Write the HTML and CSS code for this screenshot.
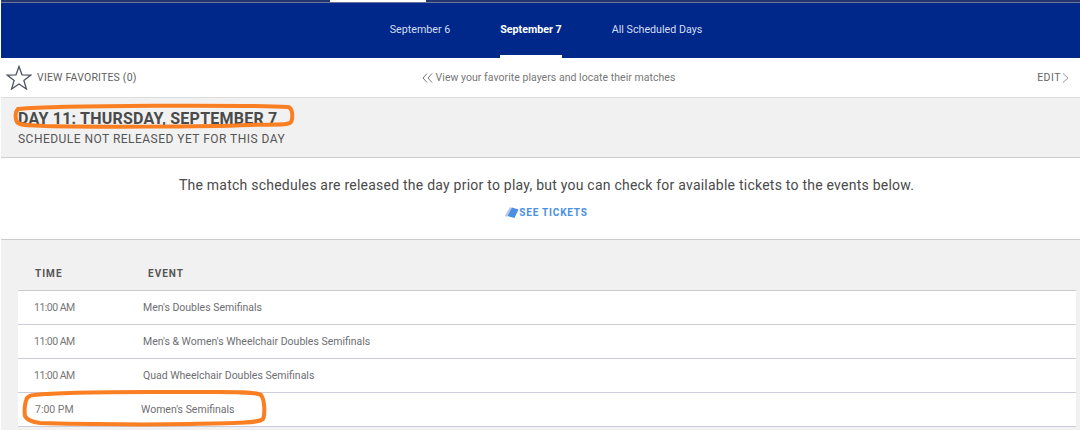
FILE: index.html
```html
<!DOCTYPE html>
<html lang="en">
<head>
    <meta charset="UTF-8">
    <meta name="viewport" content="width=device-width, initial-scale=1.0">
    <title>Schedule - Day 11</title>
    <link rel="stylesheet" href="styles.css">
</head>
<body>
    <div class="top-strip">
        <div class="top-strip-active"></div>
    </div>
    <!-- Day tabs -->
    <nav class="day-nav">
        <a class="day-tab">September 6</a>
        <a class="day-tab active">September 7</a>
        <a class="day-tab">All Scheduled Days</a>
    </nav>
    <!-- Favorites bar -->
    <div class="fav-bar">
        <div class="fav-left">
            <svg class="star" width="26" height="25" viewBox="0 0 26 25">
                <path d="M13 1.500l3 8.300 8.900.3-7 5.400 2.500 8.500-7.400-5-7.400 5 2.500-8.500-7-5.400 8.900-.3z" fill="none" stroke="#4f5560" stroke-width="1.300"/>
            </svg>
            <span>VIEW FAVORITES (0)</span>
        </div>
        <div class="fav-middle">
            <svg width="11" height="10" viewBox="0 0 11 10">
                <path d="M5 .5L1 5l4 4.500M10 .5L6 5l4 4.500" fill="none" stroke="#777" stroke-width="1"/>
            </svg>
            <span>View your favorite players and locate their matches</span>
        </div>
        <div class="fav-right">
            <span>EDIT</span>
            <svg width="7" height="10" viewBox="0 0 7 10">
                <path d="M1 .5L6 5 1 9.500" fill="none" stroke="#999" stroke-width="1"/>
            </svg>
        </div>
    </div>
    <!-- Day heading -->
    <header class="day-header">
        <h1>DAY 11: THURSDAY, SEPTEMBER 7</h1>
        <p>SCHEDULE NOT RELEASED YET FOR THIS DAY</p>
    </header>
    <!-- Notice -->
    <section class="notice">
        <p>The match schedules are released the day prior to play, but you can check for available tickets to the events below.</p>
        <a class="tickets-link">
            <svg width="14" height="13" viewBox="0 0 14 13">
                <path d="M0 9.500L5 1l2 1L2 11z" fill="#b9c6ea"/>
                <path d="M2.500 10L7 1.500 13.500 3.500 9.500 12z" fill="#4a90e2"/>
            </svg>
            <span>SEE TICKETS</span>
        </a>
    </section>
    <!-- Schedule table -->
    <section class="schedule">
        <div class="schedule-head">
            <span class="head-time">TIME</span>
            <span>EVENT</span>
        </div>
        <div class="schedule-row">
            <span class="col-time">11:00 AM</span>
            <span>Men's Doubles Semifinals</span>
        </div>
        <div class="schedule-row">
            <span class="col-time">11:00 AM</span>
            <span>Men's &amp; Women's Wheelchair Doubles Semifinals</span>
        </div>
        <div class="schedule-row">
            <span class="col-time">11:00 AM</span>
            <span>Quad Wheelchair Doubles Semifinals</span>
        </div>
        <div class="schedule-row shifted">
            <span class="col-time">7:00 PM</span>
            <span>Women's Semifinals</span>
        </div>
    </section>
    <!-- Orange annotations drawn over the page -->
    <svg class="mark" width="1080" height="430" viewBox="0 0 1080 430">
        <path d="M18 109C60 105 250 105 288 107C293 108 293 118 291 122C288 126 270 124 250 125C200 127 90 127 45 126C30 125 20 126 17 122C15 118 15 112 18 109Z" fill="none" stroke="#fa7f22" stroke-width="4"/>
        <path d="M34 395C70 391 140 392 190 392C225 392 255 391 261 395C265 400 265 415 263 419C258 424 220 423 190 424C140 425 80 424 40 423C32 422 27 420 25 416C24 410 25 402 27 398C29 396 31 395 34 395Z" fill="none" stroke="#fa7f22" stroke-width="4"/>
    </svg>
</body>
</html>
```

FILE: styles.css
```css
* {
    margin: 0;
    padding: 0;
    box-sizing: border-box;
}

body {
    position: relative;
    height: 430px;
    padding-left: 1px;
    overflow: hidden;
    font-family: Roboto, Arial, sans-serif;
    background-color: #fff;
    color: #555;
}

.top-strip {
    height: 3px;
    padding-left: 329px;
    background-color: #24346f;
    border-bottom: 1px solid #6a769c;
}

.top-strip-active {
    width: 96px;
    height: 2px;
    background-color: #fff;
}

.day-nav {
    display: flex;
    justify-content: center;
    gap: 50px;
    height: 55px;
    padding-left: 11px;
    background-color: #00288a;
}

.day-tab {
    padding-top: 20px;
    font-size: 10.7px;
    line-height: 14px;
    color: #d6ddf0;
}

.day-tab.active {
    font-weight: 700;
    color: #fff;
    border-bottom: 3px solid #fff;
}

.fav-bar {
    display: grid;
    grid-template-columns: 1fr auto 1fr;
    align-items: center;
    height: 40px;
    padding: 0 11px 0 5px;
    font-size: 10.5px;
    background-color: #fff;
    border-bottom: 1px solid #ddd;
}

.fav-left {
    display: flex;
    align-items: center;
    gap: 5px;
    letter-spacing: .2px;
    color: #5f5f5f;
}

.fav-middle {
    display: flex;
    align-items: center;
    gap: 3px;
    padding-left: 22px;
    color: #777;
    letter-spacing: .04px;
}

.fav-right {
    display: flex;
    align-items: center;
    justify-content: flex-end;
    gap: 1px;
    letter-spacing: .5px;
    color: #666;
}

.day-header {
    height: 60px;
    padding: 11px 17px 0;
    background-color: #f1f1f1;
    border-bottom: 1px solid #ccc;
}

.day-header h1 {
    font-size: 16px;
    line-height: 20px;
    font-weight: 700;
    letter-spacing: .23px;
    color: #4a4a4a;
}

.day-header p {
    margin-top: 2px;
    font-size: 12px;
    line-height: 16px;
    letter-spacing: .47px;
}

.notice {
    height: 82px;
    padding: 19px 0 0 12px;
    text-align: center;
    background-color: #fff;
    border-bottom: 1px solid #ccc;
}

.notice p {
    font-size: 14px;
    line-height: 16px;
    letter-spacing: .235px;
    color: #4a4a4a;
}

.tickets-link {
    display: flex;
    align-items: center;
    justify-content: center;
    margin-top: 13px;
    font-size: 10px;
    font-weight: 700;
    letter-spacing: .8px;
    color: #4a90e2;
}

.schedule {
    height: 191px;
    padding: 0 4px 0 17px;
    background-color: #f1f1f1;
}

.schedule-head {
    display: flex;
    height: 51px;
    padding: 28px 0 0 17px;
    font-size: 10px;
    font-weight: 700;
    letter-spacing: 1px;
    border-bottom: 1px solid #ccc;
}

.head-time {
    width: 113px;
}

.schedule-row {
    display: flex;
    align-items: center;
    height: 34px;
    padding-left: 17px;
    font-size: 10.5px;
    color: #6e6e72;
    background-color: #fff;
    border-bottom: 1px solid #ccd;
}

.col-time {
    width: 109px;
    margin-left: -1px;
    letter-spacing: -.5px;
    color: #777;
}

.shifted .col-time {
    width: 106px;
    margin-left: 0;
    letter-spacing: 0;
}

.mark {
    position: absolute;
    top: 0;
    left: 0;
    pointer-events: none;
}
```
